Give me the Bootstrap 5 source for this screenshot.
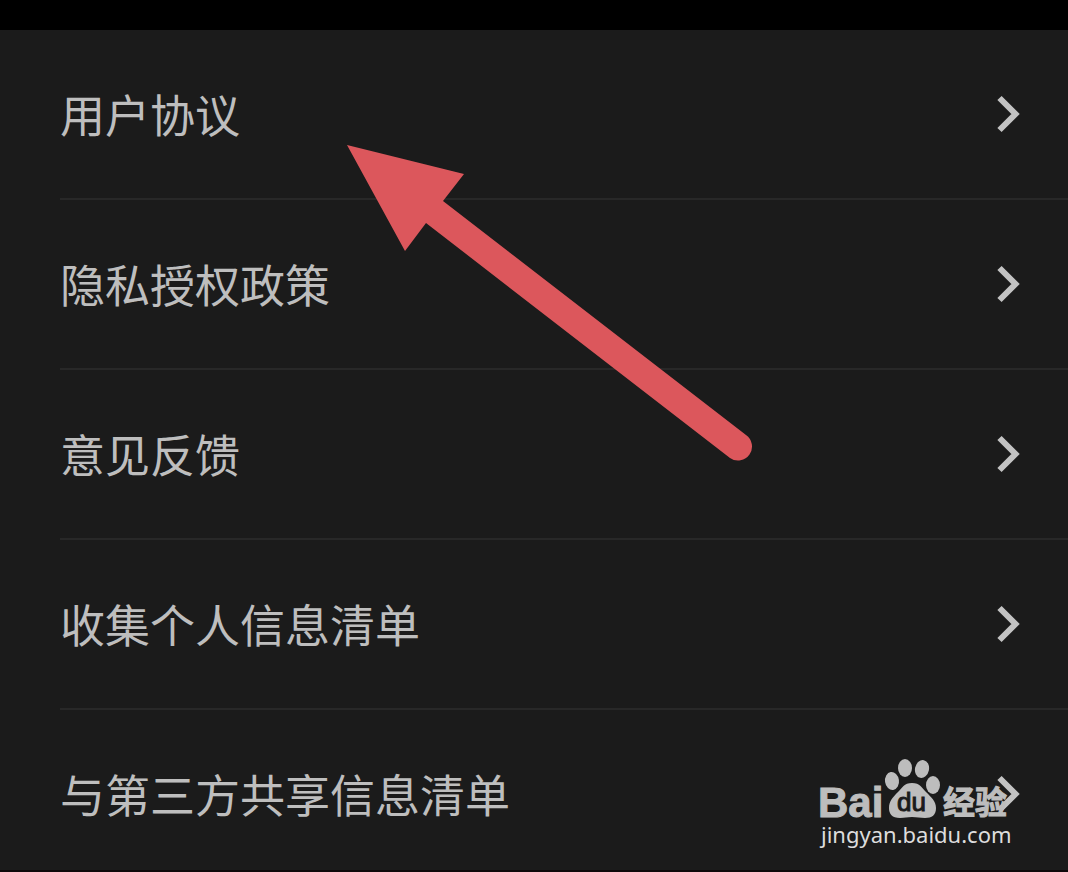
<!DOCTYPE html>
<html lang="zh-CN" data-bs-theme="dark">
<head>
<meta charset="utf-8">
<meta name="viewport" content="width=device-width, initial-scale=1">
<title>用户协议</title>
<link href="https://cdn.jsdelivr.net/npm/bootstrap@5.3.0/dist/css/bootstrap.min.css" rel="stylesheet">
<style>
body { background: #1b1b1b; font-family: "Noto Sans CJK SC", sans-serif; }
.status-strip { height: 30px; background: #000; }
.settings { padding-left: 60px; }
.settings-row { height: 170px; padding: 0 47px 0 0; border-bottom: 2px solid #282828; color: #bebebe; font-size: 45px; line-height: 60px; }
.settings-row:hover { color: #d0d0d0; }
.settings-row:last-child { height: 160px; border-bottom: 0; }
.settings-row:last-child > * { margin-top: 8px; }
.bottom-edge { height: 2px; background: #0e090b; }
.pointer { left: 340px; top: 140px; pointer-events: none; }
.watermark { right: 48px; bottom: 20px; pointer-events: none; }
.latin { font-family: "Liberation Sans", sans-serif; font-weight: 700; }
.paw-text { font-family: "Liberation Sans", sans-serif; font-weight: 400; }
.site { font-family: "Noto Sans", sans-serif; font-weight: 400; }
.hanzi { font-family: "Noto Sans CJK SC", sans-serif; font-weight: 700; }
</style>
</head>
<body>
<svg width="0" height="0" class="position-absolute" aria-hidden="true">
  <symbol id="chevron" viewBox="0 0 24 38"><path d="M2.500 3 18.500 19 2.500 35" fill="none" stroke="#c3c3c3" stroke-width="6"/></symbol>
</svg>
<div class="position-relative">
  <div class="status-strip"></div>
  <nav class="settings d-flex flex-column" aria-label="设置">
    <a href="#" class="settings-row d-flex align-items-center justify-content-between text-decoration-none"><span>用户协议</span><svg width="24" height="38" aria-hidden="true"><use href="#chevron"/></svg></a>
    <a href="#" class="settings-row d-flex align-items-center justify-content-between text-decoration-none"><span>隐私授权政策</span><svg width="24" height="38" aria-hidden="true"><use href="#chevron"/></svg></a>
    <a href="#" class="settings-row d-flex align-items-center justify-content-between text-decoration-none"><span>意见反馈</span><svg width="24" height="38" aria-hidden="true"><use href="#chevron"/></svg></a>
    <a href="#" class="settings-row d-flex align-items-center justify-content-between text-decoration-none"><span>收集个人信息清单</span><svg width="24" height="38" aria-hidden="true"><use href="#chevron"/></svg></a>
    <a href="#" class="settings-row d-flex align-items-center justify-content-between text-decoration-none"><span>与第三方共享信息清单</span><svg width="24" height="38" aria-hidden="true"><use href="#chevron"/></svg></a>
  </nav>
  <div class="bottom-edge"></div>

  <svg class="pointer position-absolute" width="420" height="330" viewBox="340 140 420 330" aria-hidden="true">
    <path d="M347 145 464 174 443 201 746 435A14 14 0 0 1 730 458L426 223 405 251Z" fill="#dc575c"/>
  </svg>

  <svg class="watermark position-absolute" width="204" height="96" viewBox="816 756 204 96" role="img" aria-label="Baidu 经验">
    <g fill="#bdbdbd">
      <text class="latin" x="818" y="817" font-size="42" stroke="#bdbdbd">Bai</text>
      <ellipse cx="892" cy="781" rx="7" ry="9" transform="rotate(-8 892 781)"/>
      <ellipse cx="905" cy="768" rx="7" ry="9"/>
      <ellipse cx="922" cy="769" rx="7" ry="9" transform="rotate(12 922 769)"/>
      <ellipse cx="933" cy="785" rx="7" ry="9"/>
      <path d="M912 783C920 783 922 788 926 792 931 797 936 801 936 808 936 815 932 818 925 818 920 818 917 817 912 817 907 817 905 818 900 818 892 818 889 814 889 808 889 801 893 797 898 792 902 788 904 783 912 783Z"/>
      <text class="hanzi" x="943" y="814" font-size="32" stroke="#bdbdbd">经验</text>
    </g>
    <text class="paw-text" x="897" y="811" font-size="26" fill="#1b1b1b" stroke="#1b1b1b">du</text>
    <text class="site" x="821" y="843" font-size="22" fill="#dddddd">jingyan.baidu.com</text>
  </svg>
</div>
<script src="https://cdn.jsdelivr.net/npm/bootstrap@5.3.0/dist/js/bootstrap.bundle.min.js"></script>
</body>
</html>
